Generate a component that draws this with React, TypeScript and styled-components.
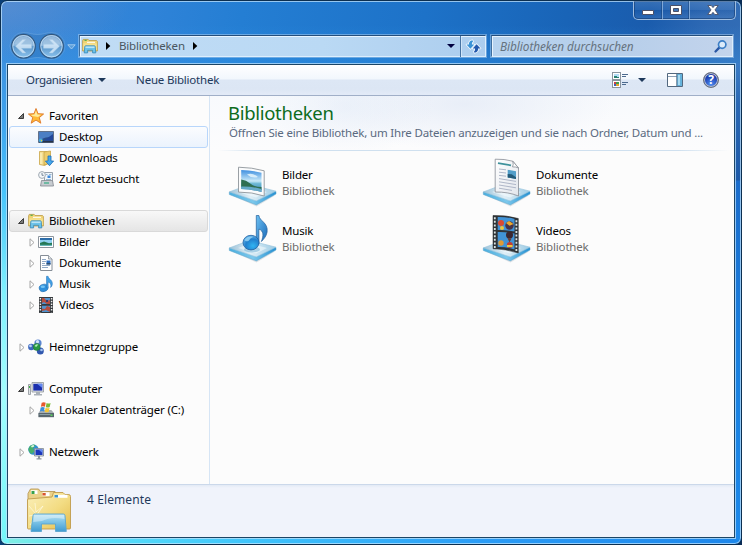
import React from 'react';
import styled, { createGlobalStyle, css } from 'styled-components';

const GlobalStyle = createGlobalStyle`
  * { box-sizing: border-box; }
  html, body { margin: 0; padding: 0; }
  body {
    width: 742px;
    height: 545px;
    overflow: hidden;
    background: linear-gradient(90deg, #0a3f78, #0a2c55);
    font-family: "Noto Sans", "Open Sans", sans-serif;
    font-size: 11.5px;
    letter-spacing: -0.17px;
    line-height: 16px;
    color: #000;
  }
  svg { display: block; flex: none; overflow: visible; }
`;

/* ---------- Window chrome ---------- */

const Window = styled.div`
  width: 742px;
  height: 545px;
  display: flex;
  flex-direction: column;
  border: 1px solid #0c2f50;
  border-radius: 7px;
  box-shadow: inset 0 0 0 1px rgba(200, 232, 255, 0.7);
  background:
    linear-gradient(180deg, #3b7cc6 0, #2a68b4 40px, #1c59a8 117px, #1a6ccb 118px, #1880e0 300px, #1c88ea 100%)
      right 0 top 62px / 8px 480px no-repeat,
    linear-gradient(180deg, #3d92e0 0, #3fa4ee 60px, #49c4fb 130px, #7ff0fd 230px, #a2fdfd 330px, #74f6f8 100%)
      left 0 top 62px / 8px 480px no-repeat,
    linear-gradient(90deg, #86efe0 0, #5ee6f8 60px, #3fc4fb 250px, #2a9cf6 480px, #1d86ea 100%)
      left 0 bottom 0 / 100% 8px no-repeat,
    radial-gradient(ellipse 130px 60px at 0 0, rgba(110, 145, 205, 0.5), transparent),
    linear-gradient(180deg, transparent 24px, rgba(60, 165, 245, 0.3) 64px),
    linear-gradient(100deg, #3c88d6 0, #2f83d8 150px, #247ed3 240px, #1d72c8 420px, #1964b7 560px, #1a5cad 640px, #2e69b4 700px, #3b74b8 100%);
`;

const CaptionBar = styled.div`
  height: 20px;
  display: flex;
  justify-content: flex-end;
  padding-right: 5px;
`;

const CaptionGroup = styled.div`
  display: flex;
  width: 103px;
  height: 19px;
  border: 1px solid #9dbce0;
  border-top: 0;
  border-radius: 0 0 5px 5px;
  box-shadow: inset 0 0 0 1px rgba(16, 52, 102, 0.5);
  background: linear-gradient(180deg, rgba(255, 255, 255, 0.12), rgba(255, 255, 255, 0.05) 50%, rgba(0, 20, 80, 0.05) 51%, rgba(255, 255, 255, 0.08));
`;

const CaptionButton = styled.button<{ $width: number }>`
  width: ${p => p.$width}px;
  height: 18px;
  padding: 0;
  border: 0;
  background: none;
  display: flex;
  align-items: center;
  justify-content: center;
  & + & {
    border-left: 1px solid rgba(180, 208, 238, 0.6);
    box-shadow: -1px 0 0 rgba(16, 52, 102, 0.4);
  }
`;

const NavRow = styled.div`
  height: 30px;
  margin: 10px 8px 3px;
  display: flex;
  align-items: center;
`;

const fieldBox = css`
  height: 22px;
  display: flex;
  align-items: center;
  border: 1px solid rgba(226, 242, 255, 0.85);
  border-top-color: #244e7c;
  border-left-color: #3f6f9f;
  box-shadow: 0 0 0 1px rgba(190, 218, 245, 0.45), inset 1px 1px 0 rgba(240, 248, 255, 0.85);
`;

const AddressBar = styled.div`
  ${fieldBox}
  width: 407px;
  padding-left: 2px;
  color: #4a565e;
  background: linear-gradient(90deg, #c0dcf5, #bad9f4 60%, #accdee);
`;

const AddressText = styled.span`
  margin: 0 8px 0 9px;
  width: 66px;
`;

const AddressTail = styled.div`
  margin-left: auto;
  display: flex;
  align-items: center;
  height: 20px;
`;

const RefreshButton = styled.div`
  width: 25px;
  height: 21px;
  margin-left: 5px;
  display: flex;
  align-items: center;
  justify-content: center;
  border-left: 1px solid #4673a3;
  box-shadow: inset 1px 0 0 rgba(230, 243, 255, 0.6);
`;

const SearchBox = styled.div`
  ${fieldBox}
  width: 242px;
  margin-left: 5px;
  padding: 0 5px 0 8px;
  justify-content: space-between;
  background: linear-gradient(90deg, #b7d3ef, #b6ceea 50%, #c3d4ec);
`;

const SearchText = styled.span`
  font-size: 11.8px;
  letter-spacing: -0.05px;
  font-style: italic;
  color: #66737f;
`;

const Client = styled.div`
  width: 728px;
  height: 474px;
  margin-left: 6px;
  display: flex;
  flex-direction: column;
  border: 1px solid #1c4565;
  box-shadow: 0 0 0 1px rgba(190, 226, 252, 0.75);
  background: #fcfcfc;
`;

/* ---------- Toolbar ---------- */

const Toolbar = styled.div`
  height: 31px;
  flex: none;
  display: flex;
  align-items: center;
  padding: 0 15px 0 18px;
  border-bottom: 1px solid #a0afc8;
  background: linear-gradient(180deg, #ffffff 0, #f2f7fd 14px, #dde7f5 15px, #dce6f4 24px, #e2eaf7 29px);
  color: #1e395b;
`;

const ToolbarItem = styled.div<{ $gap: number; $tracking: number }>`
  display: flex;
  align-items: center;
  gap: 6px;
  margin-right: ${p => p.$gap}px;
  letter-spacing: ${p => p.$tracking}px;
`;

const ToolbarTools = styled.div`
  margin-left: auto;
  display: flex;
  align-items: center;
`;

const ToolSlot = styled.div<{ $before: number }>`
  margin-left: ${p => p.$before}px;
`;

/* ---------- Panes ---------- */

const Panes = styled.div`
  flex: 1;
  min-height: 0;
  display: flex;
`;

const NavPane = styled.nav`
  width: 202px;
  padding: 9px 1px 0;
  border-right: 1px solid #d6e5f5;
`;

const NavSection = styled.div`
  margin-bottom: 21px;
`;

const NavItem = styled.div<{ $level: number; $state?: 'hover' | 'selected' }>`
  height: 22px;
  width: 199px;
  margin-bottom: -1px;
  padding-left: ${p => (p.$level ? 18 : 8)}px;
  display: flex;
  align-items: center;
  border: 1px solid transparent;
  border-radius: 3px;
  ${p => p.$state === 'hover' && css`
    border-color: #b8d6fb;
    background: linear-gradient(180deg, #fbfcfe, #ebf3fd);
  `}
  ${p => p.$state === 'selected' && css`
    border-color: #d9d9d9;
    background: linear-gradient(180deg, #f8f8f8, #e5e5e5);
  `}
`;

const ArrowSlot = styled.div<{ $open: boolean }>`
  width: 10px;
  height: 20px;
  padding-left: ${p => (p.$open ? 0 : 1)}px;
  display: flex;
  align-items: center;
`;

const NavLabel = styled.span`
  margin-left: 5px;
  white-space: nowrap;
`;

const Content = styled.main`
  flex: 1;
  min-width: 0;
`;

const Header = styled.header`
  height: 54px;
  padding: 6px 0 0 18px;
  background:
    radial-gradient(ellipse 90px 50px at 135px 10px, rgba(222, 232, 246, 0.45), transparent),
    radial-gradient(ellipse 150px 46px at 255px 8px, rgba(222, 230, 244, 0.6), transparent),
    linear-gradient(180deg, #f8fafd, #fcfcfd);
`;

const Title = styled.h1`
  margin: 0;
  font-size: 18.5px;
  letter-spacing: -0.3px;
  line-height: 22px;
  font-weight: 400;
  color: #0c6c1c;
`;

const Subtitle = styled.div`
  margin: 1px 0 0 1px;
  white-space: nowrap;
  color: #5a6a80;
`;

const HeaderRule = styled.div`
  height: 1px;
  margin: 0 5px 0 8px;
  background: linear-gradient(90deg, transparent, #cfe0ef 40px, #cfe0ef calc(100% - 50px), transparent);
`;

const LibraryGrid = styled.div`
  display: grid;
  grid-template-columns: 254px 254px;
  grid-auto-rows: 56px;
  padding: 9px 0 0 19px;
`;

const LibraryItem = styled.div`
  display: flex;
  gap: 5px;
`;

const LibraryText = styled.div`
  padding-top: 7px;
`;

const LibraryName = styled.div`
  color: #000;
`;

const LibraryKind = styled.div`
  color: #6d6d6d;
`;

const DetailsPane = styled.footer`
  height: 53px;
  flex: none;
  display: flex;
  padding: 3px 0 0 18px;
  border-top: 1px solid #cbd8ea;
  background: linear-gradient(180deg, #e3eaf5, #f0f3fb 3px);
  color: #1e395b;
`;

const DetailsText = styled.span`
  margin: 4px 0 0 15px;
  font-size: 12px;
  letter-spacing: 0.1px;
`;

/* ---------- Small glyphs ---------- */

const DownTriangle = ({ fill = '#1e395b', w = 8 }: { fill?: string; w?: number }) => (
  <svg width={w} height="4" viewBox="0 0 8 4" preserveAspectRatio="none"><path d="M0 0h8L4 4z" fill={fill} /></svg>
);
const RightTriangle = () => (
  <svg width="4" height="8" viewBox="0 0 4 8"><path d="M0 0v8l4.300-4z" fill="#000" /></svg>
);
const Arrow = ({ open }: { open?: boolean }) => open
  ? <svg width="6" height="6" viewBox="0 0 6 6"><path d="M5.500.5v5H.5z" fill="#7a7a7a" stroke="#3c3c3c" /></svg>
  : <svg width="6" height="9" viewBox="0 0 6 9"><path d="M1 .8v7.400l4-3.700z" fill="#fff" stroke="#a6a6a6" /></svg>;

const BackForward = () => (
  <svg width="70" height="30" viewBox="9 31 70 30">
    <defs>
      <linearGradient id="orb" x1="0" y1="0" x2="0" y2="1">
        <stop offset="0" stopColor="#7fa9d2" /><stop offset=".46" stopColor="#8fb9de" />
        <stop offset=".52" stopColor="#5c97cb" /><stop offset="1" stopColor="#8cc4ee" />
      </linearGradient>
    </defs>
    <path d="M23.500 32.500c5 0 8 2 14 2s9-2 14-2a13.500 13.500 0 0 1 0 27c-5 0-8-2-14-2s-9 2-14 2a13.500 13.500 0 0 1 0-27z" fill="#2464a6" fillOpacity=".28" stroke="#9fcbef" strokeOpacity=".35" strokeWidth=".8" />
    {[23.5, 51.5].map(x => (
      <g key={x}>
        <circle cx={x} cy="46.200" r="11.800" fill="url(#orb)" stroke="#34587e" strokeWidth="1.100" />
        <circle cx={x} cy="46.200" r="10.700" fill="none" stroke="#d6eafb" strokeOpacity=".65" />
        <path d={`M${x - 9} 44a9.200 9.200 0 0 1 18 0q-9 3-18 0z`} fill="#fff" fillOpacity=".16" />
      </g>
    ))}
    <path d="M15.500 46.200l7-6.800h3.400l-4.500 4.800H31.500v4H21.400l4.500 4.800h-3.400z" fill="#cfe4f6" fillOpacity=".9" stroke="#a5c8e6" strokeWidth=".5" />
    <path d="M59.500 46.200l-7-6.800h-3.400l4.500 4.800H43.500v4h10.100l-4.500 4.800h3.400z" fill="#cfe4f6" fillOpacity=".9" stroke="#a5c8e6" strokeWidth=".5" />
    <path d="M67.800 44.800h7.400l-3.700 4.200z" fill="#5a9edb" stroke="#a8cff0" strokeWidth=".9" />
  </svg>
);

const RefreshIcon = () => (
  <svg width="15" height="13" viewBox="0 0 15 13">
    <g stroke="#f2f9ff" strokeWidth="1.600" strokeLinejoin="round">
      <path d="M6.500.3C3.600.5 2.900 2.400 2.900 4.500H.5l3.900 4.300 3.900-4.300H5.900C5.900 2.900 6 2.100 7 1.700z" fill="#3a93d6" />
      <path d="M8.500 12.700c2.900-.2 3.600-2.100 3.600-4.200h2.400l-3.900-4.300-3.900 4.300h2.400c0 1.600-.1 2.400-1.100 2.800z" fill="#2459ad" />
    </g>
    <path d="M6.500.3C3.600.5 2.900 2.400 2.900 4.500H.5l3.900 4.300 3.900-4.300H5.900C5.900 2.900 6 2.100 7 1.700z" fill="#3a93d6" />
    <path d="M8.500 12.700c2.900-.2 3.600-2.100 3.600-4.200h2.400l-3.900-4.300-3.900 4.300h2.400c0 1.600-.1 2.400-1.100 2.800z" fill="#2459ad" />
  </svg>
);

const SearchIcon = () => (
  <svg width="13" height="13" viewBox="0 0 13 13">
    <path d="M5 7.900L1.500 11.500" stroke="#2a57a4" strokeWidth="2.300" strokeLinecap="round" />
    <circle cx="8.200" cy="4.600" r="3.700" fill="#dcebfa" stroke="#3d7fc6" strokeWidth="1.700" />
  </svg>
);

const ViewIcon = () => (
  <svg width="17" height="17" viewBox="0 0 17 17" shapeRendering="crispEdges">
    <path d="M.5.5h8v7h-8zM.5 8.500h8v7h-8z" fill="#fff" stroke="#8a949e" />
    <path d="M2 2h5v4H2z" fill="#b2dcf5" /><path d="M2 4h3v1h2v1H2z" fill="#278070" />
    <path d="M2 10h2v2H2z" fill="#cf4040" /><path d="M4 10h3v2H4z" fill="#3fa050" /><path d="M2 12h2v2H2z" fill="#3a60c0" /><path d="M4 12h3v2H4z" fill="#e0a42c" />
    <path d="M10 2.500h6M10 4.500h4M10 10.500h6M10 12.500h4" stroke="#4c6a8e" />
  </svg>
);

const PreviewPaneIcon = () => (
  <svg width="16" height="14" viewBox="0 0 16 14">
    <path d="M.5.5h15v13H.5z" fill="#fff" stroke="#52687f" />
    <path d="M1 3.500h9" stroke="#8ca0b5" /><path d="M10 1h5v12h-5z" fill="#65b3dc" /><path d="M11 2h2v10h-2z" fill="#a8daf1" /><path d="M9.800 1v12" stroke="#536f8b" />
  </svg>
);

const HelpBadge = styled.div`
  width: 16px;
  height: 16px;
  border-radius: 50%;
  border: 1px solid #6b717b;
  box-shadow: inset 0 0 0 1px #b9c0cc;
  background: radial-gradient(circle at 50% 80%, #4f8df0, #1c3fb2 60%, #1a2f92);
  color: #fff;
  font-size: 12px;
  font-weight: 700;
  line-height: 14px;
  text-align: center;
`;

/* ---------- 16px icons ---------- */

const Icon = ({ children }: { children: React.ReactNode }) => (
  <svg width="16" height="16" viewBox="0 0 16 16">{children}</svg>
);

const StarIcon = () => (
  <Icon>
    <path d="M8 .5l2 5.200 5.600.3-4.300 3.600 1.500 5.600L8 12.100 3.200 15.200l1.500-5.600L.4 6 6 5.700z" fill="#ffba35" stroke="#dd7526" strokeWidth=".9" strokeLinejoin="round" />
    <path d="M8 2.500l1.300 4 3.700.3-3 2.200L4.500 8 3 6.900l3.500-.3z" fill="#ffeb9a" />
  </Icon>
);
const DesktopIcon = () => (
  <Icon>
    <path d="M.5 2.500h15v11H.5z" fill="#2b4f87" stroke="#61718a" />
    <path d="M1 3h14v6.500C10 6.500 5 9.500 1 11.500z" fill="#4c7fc4" /><path d="M6 11.500L15 5v6.500z" fill="#23479a" />
    <path d="M1 12h14v1.500H1z" fill="#263448" /><circle cx="2.800" cy="11.600" r="2" fill="#41a7de" /><path d="M2.500 10.500l1.800.8-1 1.500z" fill="#f2d23c" />
  </Icon>
);
const DownloadsIcon = () => (
  <Icon>
    <path d="M1.500 1.500h7l1 12.500-3 1.500-5-1z" fill="#f5df92" stroke="#c9a548" strokeWidth=".8" />
    <path d="M6 2l6.500-1v12L6 15z" fill="#edcd6c" stroke="#c9a548" strokeWidth=".8" /><path d="M3 3v11" stroke="#fff5c8" />
    <path d="M10 6h3v5h2.600l-4.100 4.700L7.400 11H10z" fill="#46a8ec" stroke="#1c6cb4" strokeWidth=".8" />
  </Icon>
);
const RecentIcon = () => (
  <Icon>
    <path d="M6.500 1.500h8v9h-8z" fill="#eff5fa" stroke="#98a2ad" /><path d="M8 3.500h1.500M11 3.500h2.500M8 8.500h5" stroke="#96b5d0" /><path d="M9.500 4.500h3v2.500h-3z" fill="#3c89dd" />
    <path d="M3.500 9.500h11l1 5.500h-13z" fill="#c7ccd1" stroke="#81878e" strokeWidth=".8" /><path d="M6 11h5v2H6z" fill="#6fb9a2" />
    <circle cx="4" cy="4" r="3.400" fill="#f4f8fb" stroke="#a0a9b2" /><path d="M4 2v2.300h1.700" fill="none" stroke="#5a6c80" strokeWidth=".8" />
  </Icon>
);
const LibrariesIcon = () => (
  <Icon>
    <path d="M.6 3L1.200 1.400h5L7 2.500h7.500l.9 1V13H.6z" fill="#f0d474" stroke="#bd9a45" strokeWidth=".8" />
    <path d="M2.500 1.800h2.200v1H2.500z" fill="#39a846" /><path d="M5 3.800h8v1H5z" fill="#fff" /><path d="M1.200 5.300h13.600V12H1.200z" fill="#f6e08c" />
    <path d="M2.200 14.900l.6-6.400q.1-.7.800-.7h8.800q.7 0 .8.7l.6 6.400h-3.200v-2.600h-5v2.600z" fill="#6cc3ea" stroke="#3988b8" strokeWidth=".8" />
    <path d="M3.500 8.500h9v1.500h-9z" fill="#b9e4f6" />
  </Icon>
);
const PicturesIcon = () => (
  <Icon>
    <path d="M.5 2.500h15v11H.5z" fill="#fff" stroke="#8d959d" />
    <path d="M2 4h12v8H2z" fill="#8fd0f0" /><path d="M2 4h12v2H2z" fill="#2b6ca8" /><path d="M2 9l4-1.500 5 1.800 3-.5V11H2z" fill="#237854" /><path d="M2 10.800h12V12H2z" fill="#65b6b7" />
  </Icon>
);
const DocumentsIcon = () => (
  <Icon>
    <path d="M2.500.5h8l3.500 3.500v11.500H2.500z" fill="#fff" stroke="#868e97" /><path d="M10.500.5v3.500H14" fill="#e4e8ec" stroke="#868e97" strokeWidth=".8" />
    <path d="M4 4.500h4M4 6.500h4M4 8.500h3M4 10.500h8M4 12.500h6" stroke="#91a9c5" /><path d="M8.500 5.500h4v4h-4z" fill="#2f6fc0" /><path d="M8.500 8h4v1.500h-4z" fill="#2d4e6f" />
  </Icon>
);
const MusicIcon = () => (
  <Icon>
    <ellipse cx="5.600" cy="11.900" rx="4.400" ry="3.600" transform="rotate(-15 5.600 11.900)" fill="#2d8fdb" stroke="#1a69b0" strokeWidth=".6" />
    <ellipse cx="4.800" cy="10.800" rx="2.200" ry="1.300" fill="#72c3f5" />
    <path d="M8.500.3h1.600c.3 2.800 4.900 3.700 4.200 8.200-.2 1.400-.8 2.300-1.700 3 .9-3.200-.4-4.900-2.500-5.500V12H8.500z" fill="#409fe4" stroke="#1f6fb8" strokeWidth=".5" />
  </Icon>
);
const VideosIcon = () => (
  <Icon>
    <path d="M1 0h14v16H1z" fill="#363a3e" />
    <path d="M2.400.9v14.400M13.600.9v14.400" stroke="#f0f0f0" strokeWidth="1.500" strokeDasharray="1.500 1.300" />
    <path d="M4 1h8v6H4zM4 8.800h8V15H4z" fill="#4f93cf" />
    <path d="M4 1h2l3 3 3-1v4H9L6 5 4 6zM12 10L9 9 7 12l-3-.500V14l4-1 4 2z" fill="#b54d3e" /><path d="M8 3h2v2H8z" fill="#343b6e" />
  </Icon>
);
const HomegroupIcon = () => (
  <Icon>
    <circle cx="10" cy="4" r="3.600" fill="#5a85cf" /><circle cx="3.300" cy="8" r="3.200" fill="#3c67be" /><circle cx="12.300" cy="12" r="3.500" fill="#3158ae" />
    <circle cx="9.500" cy="2.700" r="1.600" fill="#d3e5fa" /><circle cx="2.500" cy="6.900" r="1.400" fill="#b5d0f5" /><circle cx="13.500" cy="11" r="1.300" fill="#a5c4ee" />
    <circle cx="8.700" cy="7.900" r="3.500" fill="#279943" stroke="#1d6e35" strokeWidth=".5" /><path d="M6.500 7q1.700-2.600 4-1.300-1.600.8-2.200 2.200z" fill="#b0edb4" />
  </Icon>
);
const ComputerIcon = () => (
  <Icon>
    <path d="M.5 3.500h2v10h-2z" fill="#dfe3e6" stroke="#8c9298" strokeWidth=".8" /><path d="M1 5h1v2H1z" fill="#3cb043" />
    <path d="M4 1.500h11.500v9.500H4z" fill="#e1e4e8" stroke="#8d949b" strokeWidth=".8" /><path d="M5.300 2.800h9v6.800h-9z" fill="#1b2fae" /><path d="M9 2.800h5.300V7z" fill="#6389f0" />
    <path d="M8 11h4v2H8zM6 13h8v1.500H6z" fill="#a9b0b7" />
  </Icon>
);
const DriveIcon = () => (
  <Icon>
    <path d="M2.500 8h10.800L16 11v4H.5v-4z" fill="#a6adb3" /><path d="M.5 11H16v4.200H.5z" fill="#59666e" /><path d="M1.500 12h11v1h-11z" fill="#8ba0a8" /><path d="M12.500 12.500h2v1.400h-2z" fill="#5be35c" />
    <path d="M3.700.8q2.300-1.200 4 0L6.900 4.700q-1.900-1-4 0z" fill="#e8582c" /><path d="M8.600 1.100q2.200 1 4 0l-.9 3.900q-2.200 1-3.900 0z" fill="#7bbb36" />
    <path d="M2.700 5.500q2.200-1 4 0L5.900 9.400q-1.900-1-4 0z" fill="#3c8ed8" /><path d="M7.600 5.800q2.200 1 4 0l-.9 3.900q-2.200 1-3.900 0z" fill="#f5c532" />
  </Icon>
);
const NetworkIcon = () => (
  <Icon>
    <circle cx="5.500" cy="5.600" r="5.200" fill="#2f8fd0" /><path d="M2 2q3-2.500 5.500-1L5 4.500 6.500 7 4 10Q0 8 .5 4.500z" fill="#47b06c" /><path d="M3 2l2.500-1.200.8 1.700-2.500 1z" fill="#d9f6df" />
    <path d="M6.500 4.500h9v7.500h-9z" fill="#d9dee4" stroke="#7c8791" strokeWidth=".8" /><path d="M7.500 5.500h7v5.500h-7z" fill="#1b37bb" /><path d="M10.500 5.500h4V9z" fill="#6389f0" />
    <path d="M10 12h2v2.500h-2zM8.500 14.300h5v1.200h-5z" fill="#8f979f" />
  </Icon>
);

/* ---------- 48px library icons ---------- */

const IconDefs = () => (
  <svg width="0" height="0">
    <defs>
      <linearGradient id="tray" x1="0" y1="0" x2="1" y2="0"><stop offset="0" stopColor="#9fc3d8" /><stop offset=".45" stopColor="#e0eff7" /><stop offset="1" stopColor="#9ccbe4" /></linearGradient>
      <linearGradient id="trayEdge" x1="0" y1="0" x2="1" y2="0"><stop offset="0" stopColor="#4aaede" /><stop offset=".5" stopColor="#7cc8ec" /><stop offset="1" stopColor="#2590d2" /></linearGradient>
      <linearGradient id="note" x1="0" y1="0" x2="1" y2="1"><stop offset="0" stopColor="#6cc0f2" /><stop offset="1" stopColor="#1767b7" /></linearGradient>
      <radialGradient id="noteHead" cx=".62" cy=".72" r=".75"><stop offset="0" stopColor="#30b4f2" /><stop offset=".6" stopColor="#2280cd" /><stop offset="1" stopColor="#66b7ec" /></radialGradient>
      <linearGradient id="sky" x1="0" y1="0" x2="0" y2="1"><stop offset="0" stopColor="#3f8fe0" /><stop offset=".5" stopColor="#c9e9f8" /><stop offset=".62" stopColor="#6cb8d4" /><stop offset="1" stopColor="#3b86b8" /></linearGradient>
      <linearGradient id="paper" x1="0" y1="0" x2="1" y2="1"><stop offset="0" stopColor="#fff" /><stop offset="1" stopColor="#e2e6ec" /></linearGradient>
      <linearGradient id="folder" x1="0" y1="0" x2="1" y2="1"><stop offset="0" stopColor="#fbf0bb" /><stop offset=".55" stopColor="#f3dc83" /><stop offset="1" stopColor="#e5bd4c" /></linearGradient>
      <linearGradient id="stand" x1="0" y1="0" x2="0" y2="1"><stop offset="0" stopColor="#bfe4f4" /><stop offset=".45" stopColor="#7cc3e6" /><stop offset="1" stopColor="#3f9bd2" /></linearGradient>
    </defs>
  </svg>
);

const LibraryIcon = ({ children }: { children: React.ReactNode }) => (
  <svg width="48" height="48" viewBox="1 0 48 48">
    <path d="M3 35L28.500 46.500 47 35.500z" fill="#70879a" fillOpacity=".22" />
    <path d="M1.300 32v2.500l27 10.400L48 34V31.500z" fill="url(#trayEdge)" stroke="#5fa4cb" strokeWidth=".5" />
    <path d="M1.300 31.900L21.500 24.500 48 31.200 28.300 41z" fill="url(#tray)" stroke="#8fc0da" strokeWidth=".6" />
    <path d="M10 32l12-4.500 17 4.500-11 5.500z" fill="#f5fbfe" fillOpacity=".55" />
    {children}
  </svg>
);

const PicturesLarge = () => (
  <LibraryIcon>
    <path d="M10.500 7.200q13.500.2 25.700 3.600V36q-12-4-25.700-3.900z" fill="#fafbfc" stroke="#8e959b" strokeWidth=".9" />
    <path d="M13.200 10q10.500.2 20.300 2.700v19.300q-10-2.800-20.300-3z" fill="url(#sky)" />
    <path d="M13.200 19.500q5 .5 9 4t11.300 3.500v3q-10-2-20.300-3z" fill="#2f6e50" /><path d="M13.200 26.500q9-.5 20.300 2.500v3q-10-2.800-20.300-3z" fill="#65a9c7" />
    <path d="M19 14.500q5-2.500 11 2.500-6 2-11-2.500z" fill="#e5f4fc" fillOpacity=".85" />
  </LibraryIcon>
);

const MusicLarge = () => (
  <LibraryIcon>
    <ellipse cx="24" cy="33.500" rx="8" ry="3" fill="#4c9bc9" fillOpacity=".4" />
    <path d="M28.300-.5h2.600c.3 5.500 9.500 7 8.200 16.500-.6 4-3.200 7-5.700 9.500 2.400-6.200 2.300-10.500-2.500-12.500V28h-2.600z" fill="url(#note)" stroke="#235e9b" strokeWidth=".7" />
    <ellipse cx="23" cy="26.600" rx="8" ry="7.300" fill="url(#noteHead)" stroke="#21609f" strokeWidth=".8" />
    <path d="M16.500 24q3-4.300 9-3.200-3 1-5 4.200-2.500 1-4-1z" fill="#a0d9f7" fillOpacity=".75" />
  </LibraryIcon>
);

const DocumentsLarge = () => (
  <LibraryIcon>
    <path d="M13.200-.8q9-.4 17.600 2l5.700 6.800v28q-10.500-4.200-23.300-4z" fill="url(#paper)" stroke="#868c94" strokeWidth=".8" />
    <path d="M30.800 1.200q1 3.500-.3 5.700 3-.3 6 1.100z" fill="#fff" stroke="#868c94" strokeWidth=".8" />
    <path d="M16 3.200l13 2.200" stroke="#3f929c" strokeWidth="1.700" />
    <path d="M17 9l7 .8M17 12.200l7 .8M17 15.400l7 .8M17 18.600l17 2.800M17 21.800l17 2.800M17 25l17 2.800M17 28.200l13 2.200" stroke="#a7b0c3" strokeWidth=".9" />
    <path d="M25.700 9.800l8.300 1.500V19l-8.300-1.500z" fill="#529ec9" /><path d="M25.700 14l4 .3 4.300 3V19l-8.300-1.500z" fill="#245a78" />
  </LibraryIcon>
);

const VideosLarge = () => (
  <LibraryIcon>
    <path d="M11-.5q13-.5 25.300 3V37Q24 33 11 32.700z" fill="#303438" stroke="#1e2225" strokeWidth=".5" />
    <path d="M12.800 1.200v31" stroke="#dbe5e5" strokeWidth="1.800" strokeDasharray="2 1.600" /><path d="M34.400 4.200v31.200" stroke="#dbe5e5" strokeWidth="1.800" strokeDasharray="2 1.600" />
    <path d="M15.700 1q9-.2 16.800 2v12.500q-8-1.700-16.800-1.500zM15.700 16q9-.2 16.800 1.500V33.500q-8-2.800-16.800-2.500z" fill="#4193d6" />
    <circle cx="27.500" cy="9.500" r="4.200" fill="#493449" /><path d="M24 7l3-2 4.500 3-4 1.800z" fill="#edaa2e" /><circle cx="19" cy="7" r="3" fill="#da4a32" /><circle cx="20" cy="12" r="2" fill="#ecc63b" />
    <circle cx="27.500" cy="19" r="3.500" fill="#3b2730" /><path d="M25.500 22l4 .5-2 4z" fill="#6a3b30" /><circle cx="19" cy="27" r="2.700" fill="#e09a33" /><circle cx="27.800" cy="29" r="3" fill="#c23d32" /><path d="M25 29h5.500v2H25z" fill="#e7ca42" />
  </LibraryIcon>
);

const FolderLarge = () => (
  <svg width="46" height="46" viewBox="0 0 46 46">
    <path d="M2 10V5.500L4.500 1h8l2 2.500H29L31 7h12v31H2z" fill="#ead28a" stroke="#b99956" strokeWidth=".9" />
    <path d="M5 6V2.300h6.500V6M16.500 8V4.200h7V8" fill="#fff" /><path d="M5.500 3h3v3h-3z" fill="#38a14b" /><path d="M16.500 5h3.200v2.500h-3.200z" fill="#d9552d" />
    <path d="M2 11l24-2 1.500-4.500H37L39 6.500h3.500q2 0 2 2V40q0 1-1 1H2.500q-1 0-1-1V12q0-1 .5-1z" fill="url(#folder)" stroke="#bf9b4c" strokeWidth=".9" />
    <path d="M28.500 6.800h13v3h-13z" fill="#fff" /><path d="M28.500 7h3.500v2.500h-3.500z" fill="#3792d0" />
    <path d="M9 15l1 9 7-6-5.500 8 9.500 1-10 2M10 26L3 18m6 9l-6 1m7 0L4 37" stroke="#fffce8" strokeOpacity=".65" strokeWidth="1" fill="none" />
    <path d="M5 43.500L7 27.500Q7.200 26 8.700 26h28.600q1.500 0 1.700 1.500l1.300 16H29.500V36h-14v7.500z" fill="url(#stand)" stroke="#5ba6cf" strokeWidth=".9" />
    <path d="M8 27h30l.5 4Q25 28.500 16 33l-8.800 1z" fill="#e2f4fb" fillOpacity=".5" />
  </svg>
);

/* ---------- Data ---------- */

type Node = { label: string; icon: React.ReactNode; level: number; arrow?: 'open' | 'closed'; state?: 'hover' | 'selected' };

const sections: Node[][] = [
  [
    { label: 'Favoriten', icon: <StarIcon />, level: 0, arrow: 'open' },
    { label: 'Desktop', icon: <DesktopIcon />, level: 1, state: 'hover' },
    { label: 'Downloads', icon: <DownloadsIcon />, level: 1 },
    { label: 'Zuletzt besucht', icon: <RecentIcon />, level: 1 },
  ],
  [
    { label: 'Bibliotheken', icon: <LibrariesIcon />, level: 0, arrow: 'open', state: 'selected' },
    { label: 'Bilder', icon: <PicturesIcon />, level: 1, arrow: 'closed' },
    { label: 'Dokumente', icon: <DocumentsIcon />, level: 1, arrow: 'closed' },
    { label: 'Musik', icon: <MusicIcon />, level: 1, arrow: 'closed' },
    { label: 'Videos', icon: <VideosIcon />, level: 1, arrow: 'closed' },
  ],
  [{ label: 'Heimnetzgruppe', icon: <HomegroupIcon />, level: 0, arrow: 'closed' }],
  [
    { label: 'Computer', icon: <ComputerIcon />, level: 0, arrow: 'open' },
    { label: 'Lokaler Datenträger (C:)', icon: <DriveIcon />, level: 1, arrow: 'closed' },
  ],
  [{ label: 'Netzwerk', icon: <NetworkIcon />, level: 0, arrow: 'closed' }],
];

const libraries = [
  { name: 'Bilder', icon: <PicturesLarge /> },
  { name: 'Dokumente', icon: <DocumentsLarge /> },
  { name: 'Musik', icon: <MusicLarge /> },
  { name: 'Videos', icon: <VideosLarge /> },
];

export default function App() {
  return (
    <>
      <GlobalStyle />
      <Window>
        <CaptionBar>
          <CaptionGroup>
            <CaptionButton $width={28} aria-label="Minimieren">
              <svg width="12" height="10" viewBox="0 0 12 10"><path d="M.5 5.500h11v4H.5z" fill="#fff" stroke="#4b5068" /></svg>
            </CaptionButton>
            <CaptionButton $width={27} aria-label="Maximieren">
              <svg width="12" height="10" viewBox="0 0 12 10"><path d="M.5.5h11v9H.5z" fill="#fff" stroke="#4b5068" /><path d="M3.500 3.500h5v3h-5z" fill="#3d76b9" stroke="#4b5068" /></svg>
            </CaptionButton>
            <CaptionButton $width={46} aria-label="Schließen">
              <svg width="12" height="10" viewBox="0 0 12 10"><path d="M.8.5h3.500L6 2.600 7.700.5h3.500L8 4.900l3.300 4.600H7.700L6 7.300 4.300 9.500H.7L4 4.900z" fill="#fff" stroke="#4b5068" strokeWidth=".9" /></svg>
            </CaptionButton>
          </CaptionGroup>
        </CaptionBar>

        <NavRow>
          <BackForward />
          <AddressBar>
            <LibrariesIcon />
            <ToolSlot $before={8}><RightTriangle /></ToolSlot>
            <AddressText>Bibliotheken</AddressText>
            <RightTriangle />
            <AddressTail>
              <DownTriangle fill="#000040" />
              <RefreshButton><RefreshIcon /></RefreshButton>
            </AddressTail>
          </AddressBar>
          <SearchBox>
            <SearchText>Bibliotheken durchsuchen</SearchText>
            <SearchIcon />
          </SearchBox>
        </NavRow>

        <Client>
          <Toolbar>
            <ToolbarItem $gap={30} $tracking={-0.35}>Organisieren <DownTriangle /></ToolbarItem>
            <ToolbarItem $gap={0} $tracking={-0.2}>Neue Bibliothek</ToolbarItem>
            <ToolbarTools>
              <ViewIcon />
              <ToolSlot $before={9}><DownTriangle /></ToolSlot>
              <ToolSlot $before={21}><PreviewPaneIcon /></ToolSlot>
              <ToolSlot $before={20}><HelpBadge>?</HelpBadge></ToolSlot>
            </ToolbarTools>
          </Toolbar>

          <Panes>
            <NavPane>
              {sections.map((nodes, i) => (
                <NavSection key={i}>
                  {nodes.map(n => (
                    <NavItem key={n.label} $level={n.level} $state={n.state}>
                      <ArrowSlot $open={n.arrow === 'open'}>{n.arrow && <Arrow open={n.arrow === 'open'} />}</ArrowSlot>
                      {n.icon}
                      <NavLabel>{n.label}</NavLabel>
                    </NavItem>
                  ))}
                </NavSection>
              ))}
            </NavPane>
            <Content>
              <Header>
                <Title>Bibliotheken</Title>
                <Subtitle>Öffnen Sie eine Bibliothek, um Ihre Dateien anzuzeigen und sie nach Ordner, Datum und ...</Subtitle>
              </Header>
              <HeaderRule />
              <LibraryGrid>
                {libraries.map(l => (
                  <LibraryItem key={l.name}>
                    {l.icon}
                    <LibraryText>
                      <LibraryName>{l.name}</LibraryName>
                      <LibraryKind>Bibliothek</LibraryKind>
                    </LibraryText>
                  </LibraryItem>
                ))}
              </LibraryGrid>
            </Content>
          </Panes>

          <DetailsPane>
            <FolderLarge />
            <DetailsText>4 Elemente</DetailsText>
          </DetailsPane>
        </Client>
      </Window>
      <IconDefs />
    </>
  );
}
